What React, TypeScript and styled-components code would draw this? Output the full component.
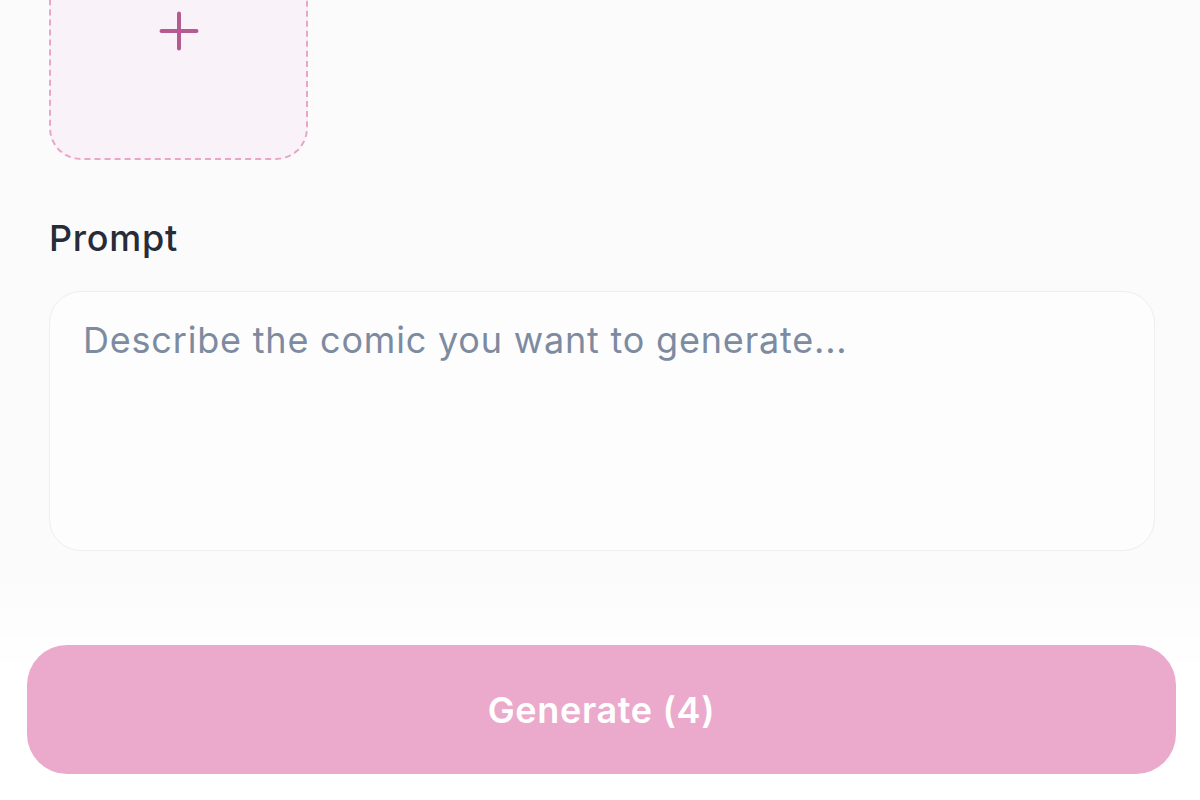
import React from "react";
import styled, { createGlobalStyle } from "styled-components";

const GlobalStyle = createGlobalStyle`
  html, body {
    margin: 0;
    padding: 0;
    background: #fcfbfc;
    font-family: Inter, "Noto Sans", sans-serif;
    overflow: hidden;
  }
  * { box-sizing: border-box; }
`;

const Screen = styled.div`
  width: 1200px;
  height: 800px;
  display: flex;
  flex-direction: column;
  background: #fcfbfc;
  overflow: hidden;
`;

const Content = styled.div`
  display: flex;
  flex-direction: column;
  padding: 0 45px 0 49px;
`;

const UploadTile = styled.button`
  width: 259px;
  height: 259px;
  margin-top: -99px;
  border: 2px dashed #eaa6c8;
  border-radius: 32px;
  background: #f9f3f9;
  display: flex;
  align-items: center;
  justify-content: center;
  padding: 0;
  cursor: pointer;
`;

const Label = styled.label`
  margin-top: 57px;
  font-size: 36px;
  line-height: 42px;
  font-weight: 500;
  letter-spacing: 0.75px;
  color: #272c38;
`;

const PromptBox = styled.textarea`
  margin-top: 32px;
  height: 260px;
  width: 100%;
  resize: none;
  border: 1.5px solid #efedef;
  border-radius: 32px;
  background: #fdfdfd;
  padding: 23px 33px;
  font-family: Inter, "Noto Sans", sans-serif;
  font-size: 36px;
  line-height: 50px;
  letter-spacing: 0.8px;
  color: #272c38;
  outline: none;
  &::placeholder {
    color: #7d8ba1;
  }
`;

const Footer = styled.div`
  margin-top: 19px;
  padding: 75px 24px 26px 27px;
  background: linear-gradient(to bottom, rgba(255, 255, 255, 0), #ffffff 45%);
  display: flex;
`;

const GenerateButton = styled.button`
  flex: 1;
  height: 129px;
  border: none;
  border-radius: 40px;
  background: #ebaacb;
  color: #ffffff;
  font-family: Inter, "Noto Sans", sans-serif;
  font-size: 36px;
  font-weight: 600;
  letter-spacing: 0.65px;
  cursor: pointer;
`;

const PlusIcon = () => (
  <svg width="40" height="40" viewBox="0 0 40 40" fill="none">
    <path
      d="M20 2.5v35M2.5 20h35"
      stroke="#b65a92"
      strokeWidth="4"
      strokeLinecap="round"
    />
  </svg>
);

export default function App() {
  return (
    <>
      <GlobalStyle />
      <Screen>
        <Content>
          <UploadTile aria-label="Add image">
            <PlusIcon />
          </UploadTile>
          <Label htmlFor="prompt">Prompt</Label>
          <PromptBox id="prompt" placeholder="Describe the comic you want to generate..." />
        </Content>
        <Footer>
          <GenerateButton>Generate (4)</GenerateButton>
        </Footer>
      </Screen>
    </>
  );
}
